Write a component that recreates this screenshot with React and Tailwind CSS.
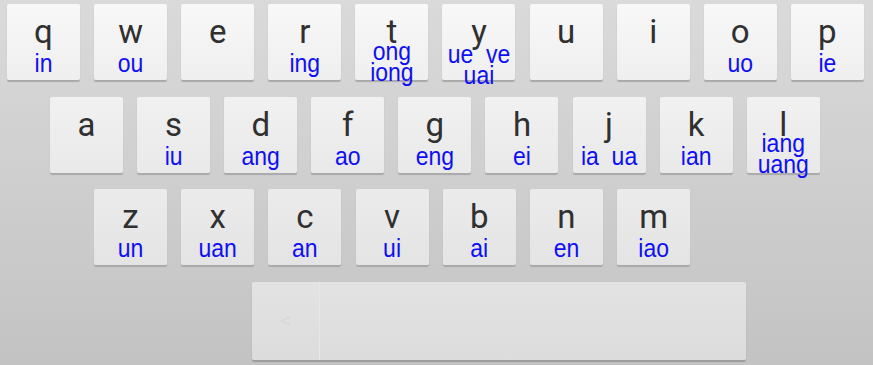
import React from "react";

const rows = [
    [
        { k: "q", s: ["in"] },
        { k: "w", s: ["ou"] },
        { k: "e", s: [] },
        { k: "r", s: ["ing"] },
        { k: "t", s: ["ong", "iong"], mt: "mt-[2px]" },
        { k: "y", s: ["ue\u00a0\u00a0ve", "uai"], mt: "mt-[5px]" },
        { k: "u", s: [] },
        { k: "i", s: [] },
        { k: "o", s: ["uo"] },
        { k: "p", s: ["ie"] },
    ],
    [
        { k: "a", s: [] },
        { k: "s", s: ["iu"] },
        { k: "d", s: ["ang"] },
        { k: "f", s: ["ao"] },
        { k: "g", s: ["eng"] },
        { k: "h", s: ["ei"] },
        { k: "j", s: ["ia\u00a0\u00a0ua"] },
        { k: "k", s: ["ian"] },
        { k: "l", s: ["iang", "uang"], mt: "mt-[1px]" },
    ],
    [
        { k: "z", s: ["un"] },
        { k: "x", s: ["uan"] },
        { k: "c", s: ["an"] },
        { k: "v", s: ["ui"] },
        { k: "b", s: ["ai"] },
        { k: "n", s: ["en"] },
        { k: "m", s: ["iao"] },
    ],
];

const keyBg = [
    "bg-gradient-to-b from-[#f8f8f8] to-[#efefef]",
    "bg-gradient-to-b from-[#f1f1f1] to-[#e9e9e9]",
    "bg-gradient-to-b from-[#ebebeb] to-[#e4e4e4]",
];

function Key({ k, s, mt, row }) {
    const two = s.length > 1;
    return (
        <div
            className={`w-[73px] h-[76px] shrink-0 rounded-[2px] ${keyBg[row]} shadow-[0_2px_1px_#a9a9a9] flex flex-col items-center`}
        >
            <div className="mt-[21px] h-[14px] leading-[14px] text-[33px] text-[#303030] font-['Roboto',sans-serif]">
                {k}
            </div>
            <div
                className={`flex flex-col items-center text-[23px] text-[#0f0ff5] font-['Liberation_Sans',Arial,sans-serif] scale-y-[1.12] origin-top ${
                    two ? `${mt} leading-[19px]` : "mt-[13px] leading-[20px]"
                }`}
            >
                {s.map((t, i) => (
                    <span key={i} className="whitespace-pre">
                        {t}
                    </span>
                ))}
            </div>
        </div>
    );
}

export default function App() {
    return (
        <div className="w-[873px] h-[365px] overflow-hidden bg-gradient-to-b from-[#dadada] to-[#c3c3c3] flex flex-col pt-[4px] gap-[16.5px]">
            <div className="flex gap-[14.1px] pl-[7px]">
                {rows[0].map((x) => (
                    <Key key={x.k} {...x} row={0} />
                ))}
            </div>
            <div className="flex gap-[14.1px] pl-[50px]">
                {rows[1].map((x) => (
                    <Key key={x.k} {...x} row={1} />
                ))}
            </div>
            <div className="flex gap-[14.2px] pl-[94px]">
                {rows[2].map((x) => (
                    <Key key={x.k} {...x} row={2} />
                ))}
            </div>
            <div className="pl-[252px]">
                <div className="w-[494px] h-[78px] rounded-[2px] bg-gradient-to-b from-[#e3e3e3] to-[#dcdcdc] shadow-[0_2px_1px_#9c9c9c] flex">
                    <div className="w-[68px] border-r border-[#e7e7e7] flex items-center justify-center text-[22px] text-[#d8d8d8] font-['Roboto',sans-serif]">
                        &lt;
                    </div>
                    <div className="flex-1" />
                </div>
            </div>
        </div>
    );
}
